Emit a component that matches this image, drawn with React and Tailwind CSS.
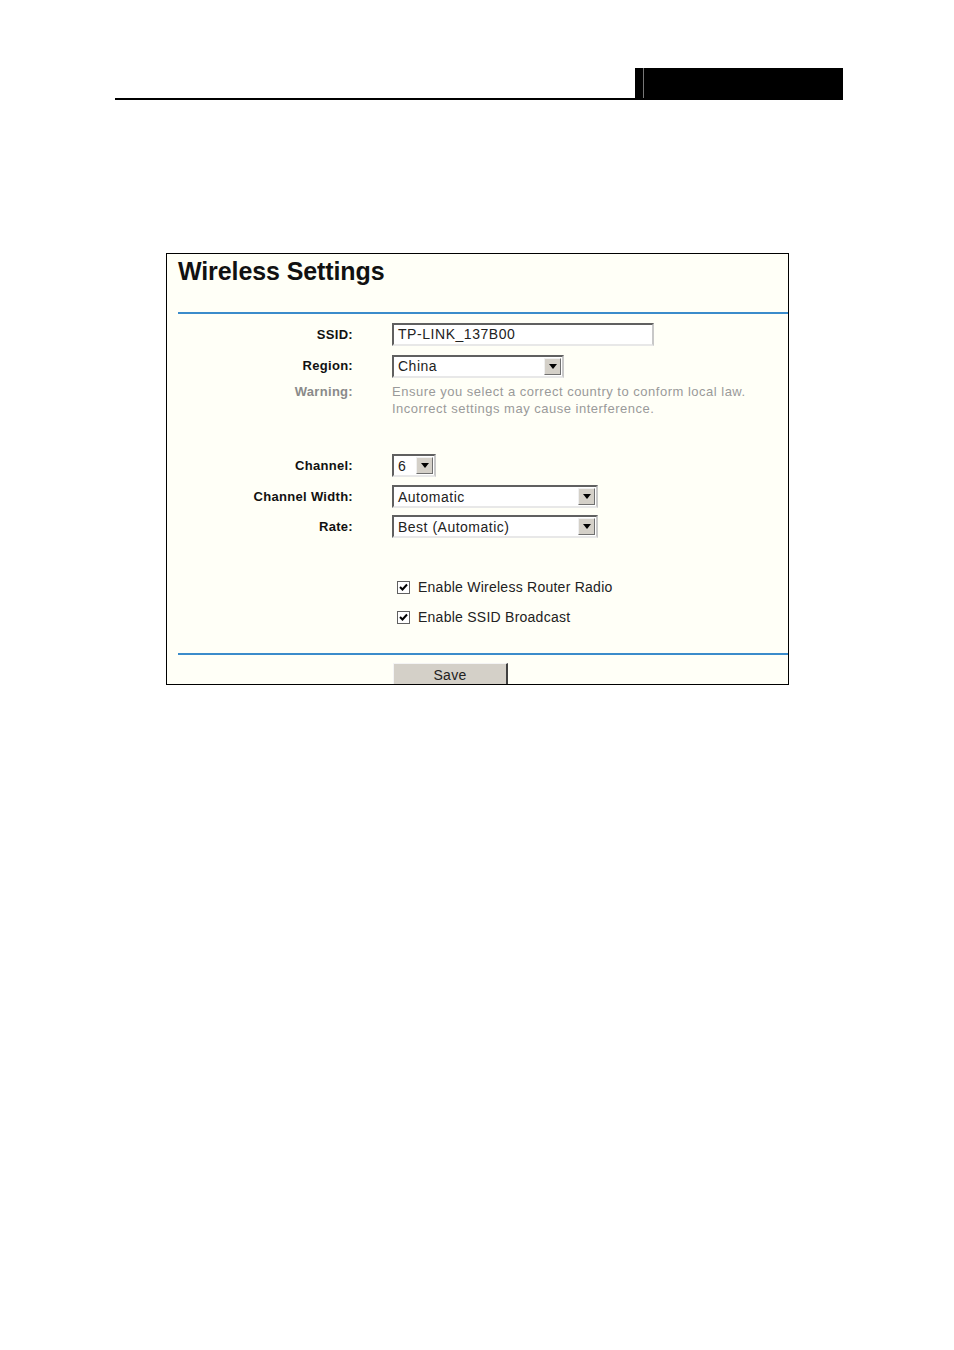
import React from "react";

const font = { fontFamily: "'Liberation Sans', Arial, sans-serif" };

function Arrow() {
  return (
    <div className="flex h-full w-[17px] items-center justify-center border border-l-[#f0f0f0] border-t-[#f0f0f0] border-r-[#707070] border-b-[#707070] bg-[#d4d0c8]">
      <svg width="8" height="5" viewBox="0 0 8 5">
        <polygon points="0,0 8,0 4,5" fill="#000" />
      </svg>
    </div>
  );
}

function Select({ value, width }) {
  return (
    <div
      className={`flex h-[23px] items-stretch border-2 border-t-[#606060] border-l-[#606060] border-r-[#c8c8c8] border-b-[#e8e8e8] bg-white ${width}`}
    >
      <div className="flex flex-1 items-center pl-[4px] text-[14px] leading-none tracking-[0.5px] text-[#222]">
        {value}
      </div>
      <div className="p-px">
        <Arrow />
      </div>
    </div>
  );
}

function Row({ label, children, className = "", labelClass = "text-[#111]" }) {
  return (
    <div className={`flex items-center ${className}`}>
      <div className={`w-[186px] shrink-0 text-right text-[13px] font-bold tracking-[0.3px] ${labelClass}`}>
        {label}
      </div>
      <div className="ml-[39px]">{children}</div>
    </div>
  );
}

function Check({ label, className = "" }) {
  return (
    <div className={`flex h-[20px] items-center pl-[230px] ${className}`}>
      <div className="flex h-[13px] w-[13px] items-center justify-center border border-[#606060] bg-white">
        <svg width="9" height="8" viewBox="0 0 9 8">
          <path d="M1 4 L3.5 6.5 L8 1.5" stroke="#000" strokeWidth="2" fill="none" />
        </svg>
      </div>
      <span className="ml-[8px] text-[14px] tracking-[0.25px] text-[#222]">{label}</span>
    </div>
  );
}

export default function App() {
  return (
    <div className="min-h-[1350px] bg-white" style={font}>
      {/* page header */}
      <div className="ml-[115px] w-[728px] pt-[68px]">
        <div className="flex justify-end border-b-2 border-black">
          <div className="flex h-[30px] w-[208px] bg-black pl-[8px]">
            <div className="h-full w-px bg-[#777]" />
          </div>
        </div>
      </div>

      {/* settings frame */}
      <div className="ml-[166px] mt-[153px] h-[432px] w-[623px] overflow-hidden border border-black bg-[#fffff7]">
        <div className="pl-[11px] pt-[3px] text-[25px] font-bold leading-[28px] tracking-[-0.1px] text-[#111]">
          Wireless Settings
        </div>
        <div className="ml-[11px] mt-[27px] h-[2px] bg-[#3b8ccb]" />

        <Row label="SSID:" className="mt-[9px] h-[23px]">
          <div className="flex h-[23px] w-[262px] items-center border-2 border-t-[#606060] border-l-[#606060] border-r-[#c8c8c8] border-b-[#e8e8e8] bg-white pl-[4px] text-[14px] tracking-[0.55px] text-[#222]">
            TP-LINK_137B00
          </div>
        </Row>
        <Row label="Region:" className="mt-[8px] h-[24px]">
          <Select value="China" width="w-[172px]" />
        </Row>
        <div className="mt-[5px] flex">
          <div className="w-[186px] shrink-0 text-right text-[13px] font-bold leading-[17px] tracking-[0.3px] text-[#8a8a8a]">
            Warning:
          </div>
          <div className="ml-[39px] text-[13px] leading-[17px] tracking-[0.5px] text-[#9a9a9a]">
            Ensure you select a correct country to conform local law.
            <br />
            Incorrect settings may cause interference.
          </div>
        </div>

        <Row label="Channel:" className="mt-[37px] h-[23px]">
          <Select value="6" width="w-[44px]" />
        </Row>
        <Row label="Channel Width:" className="mt-[8px] h-[23px]">
          <Select value="Automatic" width="w-[206px]" />
        </Row>
        <Row label="Rate:" className="mt-[7px] h-[23px]">
          <Select value="Best (Automatic)" width="w-[206px]" />
        </Row>

        <Check label="Enable Wireless Router Radio" className="mt-[39px]" />
        <Check label="Enable SSID Broadcast" className="mt-[10px]" />

        <div className="ml-[11px] mt-[26px] h-[2px] bg-[#3b8ccb]" />

        <div className="mt-[8px] pl-[226px]">
          <div className="flex h-[24px] w-[115px] items-center justify-center border-r-2 border-r-[#404040] border-t border-t-[#f4f4f4] border-l border-l-[#f4f4f4] bg-[#d4d0c8] text-[14px] tracking-[0.3px] text-[#222]">
            Save
          </div>
        </div>
      </div>
    </div>
  );
}
